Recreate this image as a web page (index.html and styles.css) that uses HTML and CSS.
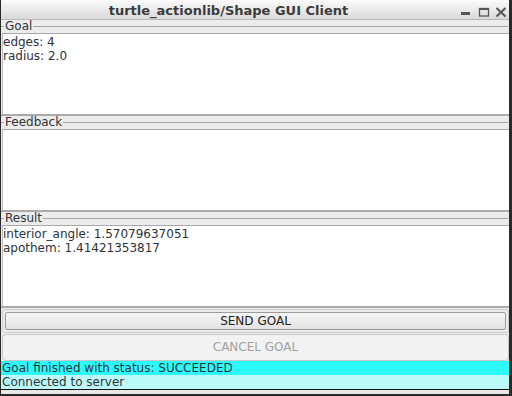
FILE: index.html
```html
<!DOCTYPE html>
<html>
<head>
<meta charset="utf-8">
<link rel="stylesheet" href="styles.css">
</head>
<body>
<div class="window">
  <div class="titlebar">
    <div class="title">turtle_actionlib/Shape GUI Client</div>
    <div class="controls">
      <svg width="53" height="19" viewBox="0 0 53 19">
        <rect x="5" y="12" width="9" height="3" fill="#555555"/>
        <rect x="23.5" y="8.5" width="9" height="7.5" fill="none" stroke="#555555" stroke-width="1.3"/>
        <rect x="23" y="8" width="10" height="2" fill="#555555"/>
        <path d="M40.5 8 L49.5 16.5 M49.5 8 L40.5 16.5" stroke="#555555" stroke-width="2"/>
      </svg>
    </div>
  </div>
  <div class="content">
    <section class="group">
      <div class="legend"><span>Goal</span></div>
      <div class="textarea">edges: 4<br>radius: 2.0</div>
    </section>
    <section class="group">
      <div class="legend"><span>Feedback</span></div>
      <div class="textarea"></div>
    </section>
    <section class="group">
      <div class="legend"><span>Result</span></div>
      <div class="textarea">interior_angle: 1.57079637051<br>apothem: 1.41421353817</div>
    </section>
    <div class="buttons">
      <div class="focus-ring"><div class="btn">SEND GOAL</div></div>
      <div class="btn-disabled">CANCEL GOAL</div>
    </div>
    <div class="status status-main">Goal finished with status: SUCCEEDED</div>
    <div class="status status-conn">Connected to server</div>
    <div class="footer"></div>
  </div>
</div>
</body>
</html>
```
FILE: styles.css
```css
html, body {
  margin: 0;
  padding: 0;
  background: #ffffff;
}
body {
  width: 512px;
  height: 396px;
  overflow: hidden;
  font-family: "DejaVu Sans", "Liberation Sans", sans-serif;
  font-size: 12px;
  color: #303438;
}
.window {
  width: 512px;
  height: 396px;
  box-sizing: border-box;
  border-left: 1px solid #2a2a2a;
  border-right: 3px solid #2a2a2a;
  border-bottom: 2px solid #2a2a2a;
  display: flex;
  flex-direction: column;
  background: #ececec;
}
.titlebar {
  height: 19px;
  border-bottom: 1px solid #b8b8b8;
  background: linear-gradient(#fbfbfb, #d9d9d9);
  display: flex;
  align-items: center;
}
.title {
  flex: 1;
  text-align: center;
  font-weight: bold;
  font-size: 13px;
  color: #3c3c3c;
  line-height: 19px;
  padding-top: 1px;
}
.controls {
  width: 53px;
  height: 19px;
  display: flex;
}
.content {
  flex: 1;
  display: flex;
  flex-direction: column;
}
.group {
  display: flex;
  flex-direction: column;
  border-bottom: 2px solid #ababab;
}
.legend {
  height: 13px;
  display: flex;
  align-items: center;
  line-height: 13px;
  font-size: 12px;
  color: #303438;
  padding-right: 1px;
}
.legend::before {
  content: "";
  width: 3px;
  height: 1px;
  background: #a6a6a6;
}
.legend::after {
  content: "";
  flex: 1;
  height: 1px;
  background: #a6a6a6;
}
.legend span {
  padding: 0 1px;
}
.textarea {
  background: #ffffff;
  border-top: 1px solid #a9a9a9;
  border-left: 1px solid #bdbdbd;
  margin-left: 1px;
  padding: 1px 0 0 0;
  box-sizing: border-box;
  height: 81px;
  line-height: 14px;
  font-size: 12px;
  color: #2e3238;
}
.buttons {
  margin-top: 1px;
  padding: 0 0 0 1px;
  display: flex;
  flex-direction: column;
  gap: 1px;
}
.focus-ring {
  height: 24px;
  box-sizing: border-box;
  border: 1px solid #cdcdcd;
  border-radius: 3px;
  padding: 2px;
  display: flex;
}
.btn {
  flex: 1;
  box-sizing: border-box;
  border: 1px solid #9c9c9c;
  border-radius: 2px;
  background: linear-gradient(#f7f7f7, #e2e2e2);
  text-align: center;
  line-height: 16px;
  font-size: 12px;
  color: #222222;
}
.btn-disabled {
  height: 27px;
  box-sizing: border-box;
  border: 1px solid #c6c6c6;
  border-radius: 4px;
  background: #f2f2f2;
  text-align: center;
  line-height: 25px;
  font-size: 12px;
  color: #a2a2a2;
}
.status {
  height: 14px;
  line-height: 14px;
  padding-left: 1px;
  font-size: 12px;
  color: #303438;
}
.status-main {
  background: #2bfbfb;
}
.status-conn {
  background: #bdfafa;
}
.footer {
  flex: 1;
  border-top: 1px solid #111111;
  background: #e8e8e8;
}
```
